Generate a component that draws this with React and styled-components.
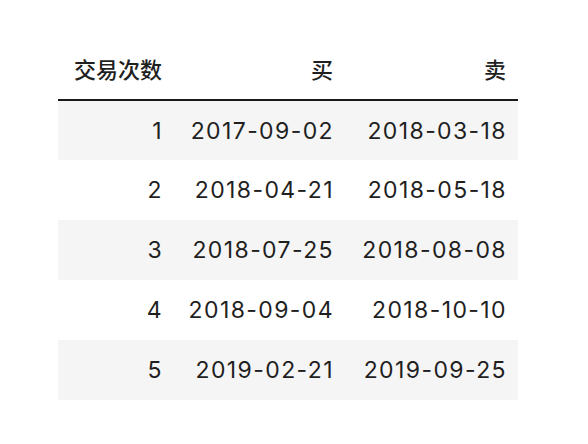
import React from 'react';
import styled, { createGlobalStyle } from 'styled-components';

const GlobalStyle = createGlobalStyle`
  html, body {
    margin: 0;
    padding: 0;
    background: #ffffff;
  }
  body {
    font-family: Inter, "Noto Sans CJK SC", sans-serif;
    color: #1f1f1f;
  }
`;

const Page = styled.div`
  padding: 38px 0 0 58px;
`;

const Table = styled.table`
  border-collapse: collapse;
  table-layout: fixed;
  width: 460px;
  font-size: 23px;
`;

const HeadCell = styled.th`
  box-sizing: border-box;
  height: 62px;
  padding: 0 12px 2px;
  text-align: right;
  font-weight: 500;
  font-size: 22px;
  font-family: "Noto Sans CJK SC", sans-serif;
  border-bottom: 2px solid #1a1a1a;
  vertical-align: middle;
  width: ${p => p.$w}px;
`;

const Row = styled.tr`
  background: ${p => (p.$odd ? '#f5f5f5' : '#ffffff')};
`;

const Cell = styled.td`
  box-sizing: border-box;
  height: 60px;
  padding: 0 11px 0 0;
  text-align: right;
  vertical-align: middle;
  white-space: nowrap;
  letter-spacing: 1.4px;
`;

const trades = [
  [1, '2017-09-02', '2018-03-18'],
  [2, '2018-04-21', '2018-05-18'],
  [3, '2018-07-25', '2018-08-08'],
  [4, '2018-09-04', '2018-10-10'],
  [5, '2019-02-21', '2019-09-25'],
];

export default function App() {
  return (
    <>
      <GlobalStyle />
      <Page>
        <Table>
          <thead>
            <tr>
              <HeadCell $w={116}>交易次数</HeadCell>
              <HeadCell $w={171}>买</HeadCell>
              <HeadCell $w={173}>卖</HeadCell>
            </tr>
          </thead>
          <tbody>
            {trades.map(([n, buy, sell], i) => (
              <Row key={n} $odd={i % 2 === 0}>
                <Cell>{n}</Cell>
                <Cell>{buy}</Cell>
                <Cell>{sell}</Cell>
              </Row>
            ))}
          </tbody>
        </Table>
      </Page>
    </>
  );
}
